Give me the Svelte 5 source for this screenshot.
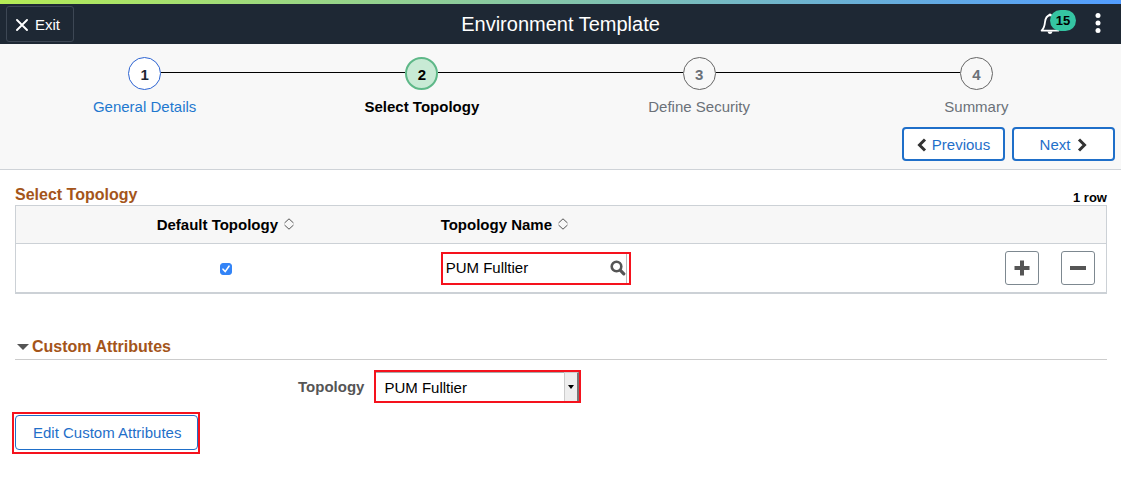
<script>
  const steps = [
    { number: 1, label: 'General Details', state: 'visited' },
    { number: 2, label: 'Select Topology', state: 'current' },
    { number: 3, label: 'Define Security', state: 'pending' },
    { number: 4, label: 'Summary', state: 'pending' }
  ];
  let isDefault = $state(true);
  let topologyName = $state('PUM Fulltier');
  let topology = $state('PUM Fulltier');
</script>

{#snippet sortIcon()}
  <svg class="sort" width="12" height="12" viewBox="0 0 12 12" aria-hidden="true">
    <path d="M1.5 5 6 .8 10.5 5M1.5 7 6 11.2 10.5 7" fill="none" stroke="#555" stroke-width="1" />
  </svg>
{/snippet}

<div class="accent"></div>
<header class="banner">
  <button class="exit" type="button">
    <svg width="12" height="12" viewBox="0 0 12 12" aria-hidden="true">
      <path d="M1 1 11 11M11 1 1 11" stroke="#fff" stroke-width="1.9" stroke-linecap="round" />
    </svg>
    Exit
  </button>
  <h1>Environment Template</h1>
  <div class="tools">
    <button class="bell" type="button" aria-label="Notifications">
      <svg width="20" height="24" viewBox="0 0 20 24" aria-hidden="true">
        <path d="M1.6 18.6C4 16.4 4.6 14 5 10.2 5.4 6 7 3.6 10 3 13 3.6 14.600 6 15 10.200 15.400 14 16 16.400 18.400 18.600Z" fill="none" stroke="#fff" stroke-width="1.8" stroke-linejoin="round" />
        <path d="M8.4 3a1.6 1.6 0 0 1 3.2 0ZM7.4 19.500h5.200q-.8 2.500-2.600 2.500T7.400 19.500Z" fill="#fff" />
      </svg>
      <span class="badge">15</span>
    </button>
    <button class="more" type="button" aria-label="Actions">
      <svg width="6" height="20" viewBox="0 0 6 20" aria-hidden="true">
        <g fill="#fff"><circle cx="3" cy="2.5" r="2.5" /><circle cx="3" cy="10" r="2.5" /><circle cx="3" cy="17.5" r="2.5" /></g>
      </svg>
    </button>
  </div>
</header>

<nav class="guide" aria-label="Steps">
  <ol>
    {#each steps as step}
      <li class={step.state} aria-current={step.state === 'current' ? 'step' : undefined}>
        <div class="track"><i></i><span class="dot">{step.number}</span><i></i></div>
        {#if step.state === 'visited'}
          <a class="label" href="#general">{step.label}</a>
        {:else}
          <span class="label">{step.label}</span>
        {/if}
      </li>
    {/each}
  </ol>
  <div class="paging">
    <button type="button">
      <svg width="10" height="14" viewBox="0 0 10 14" aria-hidden="true"><path d="M8 1.5 2.5 7 8 12.5" fill="none" stroke="#333" stroke-width="3" /></svg>
      Previous
    </button>
    <button class="next" type="button">
      Next
      <svg width="10" height="14" viewBox="0 0 10 14" aria-hidden="true"><path d="M2 1.5 7.5 7 2 12.5" fill="none" stroke="#333" stroke-width="3" /></svg>
    </button>
  </div>
</nav>

<main>
  <section>
    <div class="heading">
      <h2>Select Topology</h2>
      <span class="count">1 row</span>
    </div>
    <table>
      <colgroup><col class="c1" /><col /><col class="c3" /></colgroup>
      <thead>
        <tr>
          <th class="center">Default Topology{@render sortIcon()}</th>
          <th>Topology Name{@render sortIcon()}</th>
          <th aria-label="Row actions"></th>
        </tr>
      </thead>
      <tbody>
        <tr>
          <td class="center">
            <label class="check">
              <input type="checkbox" aria-label="Default Topology" bind:checked={isDefault} />
              <svg width="12" height="12" viewBox="0 0 12 12" aria-hidden="true"><path d="M3 6.2 5.2 8.6 9 3.2" fill="none" stroke="#fff" stroke-width="1.6" stroke-linecap="round" /></svg>
            </label>
          </td>
          <td>
            <div class="lookup">
              <input type="text" aria-label="Topology Name" bind:value={topologyName} />
              <button type="button" aria-label="Look up Topology Name">
                <svg width="16" height="16" viewBox="0 0 16 16" aria-hidden="true">
                  <circle cx="6.5" cy="6.5" r="4.8" fill="none" stroke="#555" stroke-width="2.6" />
                  <path d="M10.2 10.2 13.8 13.8" stroke="#555" stroke-width="3.2" stroke-linecap="round" />
                </svg>
              </button>
            </div>
          </td>
          <td>
            <div class="actions">
              <button type="button" aria-label="Add row">
                <svg width="16" height="16" viewBox="0 0 16 16" aria-hidden="true"><path d="M8 .5V15.5M.5 8H15.5" stroke="#555" stroke-width="4" stroke-linejoin="round" /></svg>
              </button>
              <button type="button" aria-label="Delete row">
                <svg width="16" height="16" viewBox="0 0 16 16" aria-hidden="true"><path d="M0 8H16" stroke="#555" stroke-width="4" /></svg>
              </button>
            </div>
          </td>
        </tr>
      </tbody>
    </table>
  </section>

  <section class="attributes">
    <h2 class="ruled">
      <button type="button" aria-expanded="true">
        <svg width="12" height="6" viewBox="0 0 12 6" aria-hidden="true"><path d="M0 0H12L6 6Z" fill="#555" /></svg>
        Custom Attributes
      </button>
    </h2>
    <div class="field">
      <label for="topology">Topology</label>
      <div class="picker">
        <select id="topology" bind:value={topology}>
          <option>PUM Fulltier</option>
        </select>
        <span class="arrow"><svg width="6" height="4" viewBox="0 0 6 4" aria-hidden="true"><path d="M0 0H6L3 4Z" fill="#000" /></svg></span>
      </div>
    </div>
    <div class="edit"><button type="button">Edit Custom Attributes</button></div>
  </section>
</main>

<style>
  :global(body) {
    margin: 0;
    background: #fff;
    color: #000;
    font: 15px/18px "Liberation Sans", Arial, sans-serif;
  }
  button, input, select { font: inherit; margin: 0; box-sizing: border-box; }
  button { cursor: pointer; padding: 0; }
  svg { flex: none; display: block; }
  h1, h2 { margin: 0; }

  .accent { height: 4px; background: linear-gradient(90deg, #b5ec55, #529dff); }
  .banner {
    display: grid;
    grid-template-columns: 1fr auto 1fr;
    align-items: center;
    height: 40px;
    padding: 0 20px 0 6px;
    background: #1e2834;
    color: #fff;
  }
  .banner h1 { font-size: 20px; font-weight: 400; line-height: 24px; padding-left: 14px; }
  .exit {
    justify-self: start;
    display: flex;
    align-items: center;
    gap: 7px;
    height: 36px;
    padding: 2px 13px 0 9px;
    border: 1px solid #3d4754;
    border-radius: 3px;
    background: none;
    color: #fff;
  }
  .tools { justify-self: end; display: flex; align-items: center; gap: 19px; }
  .tools button { border: 0; background: none; }
  .tools .more { padding-bottom: 2px; }
  .bell { position: relative; width: 36px; height: 28px; }
  .badge {
    position: absolute;
    top: 0;
    right: 0;
    min-width: 26px;
    border-radius: 11px;
    background: #35c4a2;
    color: #000;
    font-size: 13px;
    font-weight: 700;
    line-height: 21px;
    text-align: center;
  }

  .guide { background: #f8f8f8; border-bottom: 1px solid #cfd3d8; padding: 13px 6px 8px; }
  ol { display: flex; margin: 0; padding: 0; list-style: none; }
  li { flex: 1; text-align: center; color: #6b7178; }
  .track { display: flex; align-items: center; }
  .track i { flex: 1; height: 1px; background: #000; margin-bottom: 2px; }
  li:first-child i:first-child, li:last-child i:last-child { background: none; }
  .dot {
    box-sizing: border-box;
    width: 33px;
    height: 33px;
    border: 1px solid #666;
    border-radius: 50%;
    font-weight: 700;
    line-height: 33px;
  }
  .label { display: block; margin-top: 8px; color: inherit; text-decoration: none; }
  .visited { color: #1f78cf; }
  .visited .dot { border-color: #2d64d2; background: #fff; color: #1e2834; }
  .current { color: #000; font-weight: 700; }
  .current .dot { border: 2px solid #5eb888; background: #c8ead5; line-height: 31px; }

  .paging { display: flex; justify-content: flex-end; gap: 7px; margin-top: 11px; }
  .paging button {
    display: flex;
    align-items: center;
    justify-content: center;
    gap: 5px;
    width: 103px;
    height: 34px;
    padding-top: 2px;
    border: 2px solid #1f6fc9;
    border-radius: 4px;
    background: #fff;
    color: #1f6fc9;
  }
  .paging .next { gap: 7px; }

  main { padding: 15px 14px 28px 15px; }
  h2 { font-size: 16px; line-height: 20px; color: #a4551a; }
  .heading { display: flex; justify-content: space-between; align-items: flex-end; }
  .count { font-size: 13px; font-weight: 700; line-height: 15px; }
  table {
    width: 100%;
    table-layout: fixed;
    border-collapse: separate;
    border-spacing: 0;
    border: 1px solid #ccd1d6;
    border-bottom-width: 2px;
  }
  .c1 { width: 38.5%; }
  .c3 { width: 12%; }
  th { height: 37px; padding: 0 5px; background: #f7f7f7; border-bottom: 1px solid #ccd1d6; text-align: left; }
  td { height: 48px; padding: 0 5px; }
  .center { text-align: center; }
  .sort { display: inline-block; margin-left: 5px; }
  .check { display: inline-grid; vertical-align: middle; }
  .check input { grid-area: 1 / 1; appearance: none; width: 12px; height: 12px; border-radius: 3px; border: 1px solid #888; }
  .check input:checked { background: #3384f7; border-color: #3384f7; }
  .check svg { grid-area: 1 / 1; pointer-events: none; }
  .lookup { display: flex; align-items: center; width: 190px; height: 33px; box-sizing: border-box; border: 2px solid #f5121d; padding-right: 2px; }
  .lookup input { flex: 1; min-width: 0; border: 0; padding: 0 3px; outline: 0; }
  .lookup button { display: flex; align-items: center; height: 29px; border: 0; border-right: 1px solid #bbb; background: none; }
  .actions { display: flex; justify-content: flex-end; gap: 22px; padding-right: 6px; }
  .actions button {
    display: grid;
    place-items: center;
    width: 34px;
    height: 34px;
    border: 1px solid #7d8890;
    border-radius: 3px;
    background: #fff;
  }

  .attributes { margin-top: 43px; }
  .ruled { border-bottom: 1px solid #ccc; padding-bottom: 2px; }
  .ruled button { display: flex; align-items: center; gap: 3px; padding-left: 2px; border: 0; background: none; color: inherit; line-height: 20px; }
  .field { display: flex; align-items: center; gap: 10px; margin-top: 10px; }
  .field label { width: 32%; text-align: right; font-weight: 700; color: #555; }
  .picker { display: grid; width: 207px; height: 33px; box-sizing: border-box; border: 2px solid #f5121d; }
  .picker select { grid-area: 1 / 1; appearance: none; border: 0; border-top: 1px solid #aaa; padding: 1px 20px 0 8px; background: #fff; color: #000; outline: 0; }
  .arrow {
    grid-area: 1 / 1;
    justify-self: end;
    display: grid;
    place-items: center;
    width: 15px;
    box-sizing: border-box;
    border: solid #ccc;
    border-width: 1px 2px 0 1px;
    border-right-color: #777;
    background: #eee;
    pointer-events: none;
  }
  .edit { width: fit-content; margin: 9px 0 0 -3px; padding: 1px 0 2px 1px; border: 2px solid #f5121d; }
  .edit button { height: 35px; padding: 0 16px 0 17px; border: 1px solid #1f6fc9; border-radius: 4px; background: #fff; color: #1f6fc9; }
</style>
